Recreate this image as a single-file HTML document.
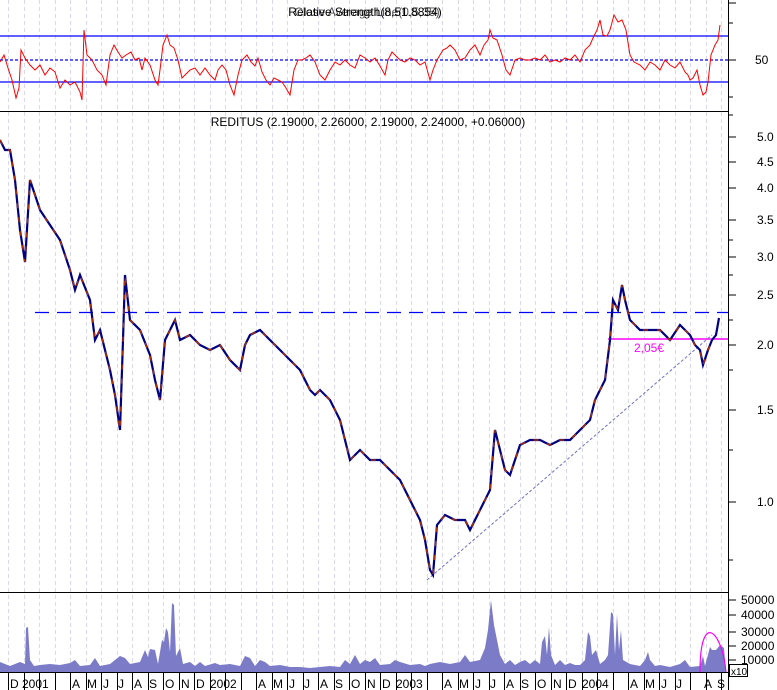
<!DOCTYPE html>
<html><head><meta charset="utf-8"><style>
html,body{margin:0;padding:0;background:#fff;}
svg{display:block;font-family:"Liberation Sans",sans-serif;}
</style></head><body>
<svg width="777" height="690" viewBox="0 0 777 690" xmlns="http://www.w3.org/2000/svg">
<rect width="777" height="690" fill="#fff"/>
<!-- grid lines -->
<g stroke="#d8d8f0" stroke-width="1" stroke-dasharray="4,3">
<path d="M8.5 0V672M24.5 0V672M39.5 0V672M55.5 0V672M70.5 0V672M86.5 0V672M101.5 0V672M117.5 0V672M132.5 0V672M148.5 0V672M163.5 0V672M179.5 0V672M194.5 0V672M210.5 0V672M225.5 0V672M241.5 0V672M256.5 0V672M272.5 0V672M287.5 0V672M303.5 0V672M318.5 0V672M334.5 0V672M349.5 0V672M365.5 0V672M380.5 0V672M396.5 0V672M411.5 0V672M427.5 0V672M442.5 0V672M458.5 0V672M473.5 0V672M489.5 0V672M504.5 0V672M520.5 0V672M535.5 0V672M551.5 0V672M566.5 0V672M582.5 0V672M597.5 0V672M613.5 0V672M628.5 0V672M644.5 0V672M659.5 0V672M675.5 0V672M690.5 0V672M706.5 0V672M721.5 0V672"/>
</g>
<!-- panel borders -->
<g stroke="#000" stroke-width="1">
<path d="M0 111.5H728M0 592.5H728M728.5 0V690M0 672.5H728"/>
</g>
<!-- RSI -->
<g stroke="#0000ff" stroke-width="1.2">
<path d="M0 36H728M0 82H728"/>
<path d="M0 60H728" stroke-dasharray="3,2"/>
</g>
<polyline fill="none" stroke="#ff0000" stroke-width="1" points="0,62 4,55 8,68 12,80 16,98 19,88 21,50 25,58 30,65 35,70 40,65 45,75 50,68 55,72 60,88 65,80 70,85 75,82 80,92 82,100 84,30 87,55 92,60 97,70 102,75 106,85 110,55 114,45 118,52 122,58 126,55 131,52 135,60 139,58 142,70 145,58 150,65 155,80 158,85 160,70 163,45 167,35 170,45 174,48 178,60 182,78 185,75 190,70 195,68 200,75 205,68 210,75 215,80 218,70 222,65 226,70 230,85 234,95 238,75 242,60 247,55 251,62 255,66 258,58 262,72 266,80 270,85 274,78 278,80 282,82 286,88 290,95 294,70 298,60 302,60 306,58 310,55 315,62 320,75 325,80 330,70 335,62 340,65 345,60 350,65 355,68 360,55 365,58 370,62 375,58 380,66 385,75 388,60 392,52 395,55 400,60 405,62 410,58 415,60 420,65 425,62 430,80 433,70 437,60 440,55 443,50 447,48 450,45 455,50 460,60 465,58 470,50 475,45 480,55 484,45 488,40 490,30 493,38 497,40 502,55 506,70 510,75 515,60 520,58 525,60 530,60 535,58 540,60 545,55 550,62 555,60 560,62 565,58 570,60 575,55 580,62 585,50 590,45 593,38 597,30 600,20 603,35 607,36 610,30 614,15 618,22 622,20 626,30 630,55 634,62 640,65 645,70 650,62 655,65 660,70 665,60 670,65 675,68 680,62 685,72 688,75 690,80 693,78 697,70 700,85 703,95 706,92 708,82 711,55 715,45 718,40 720,25"/>
<text x="365" y="16" font-size="12" text-anchor="middle" fill="#000">Relative Strength(8,51.8854)</text>
<text x="367" y="16" font-size="12" text-anchor="middle" fill="#000" opacity="0.7">Close Average Line(0,5,35)</text>
<text x="755" y="64" font-size="12" fill="#000">50</text>
<!-- Main -->
<text x="368" y="126" font-size="12" text-anchor="middle" fill="#000">REDITUS (2.19000, 2.26000, 2.19000, 2.24000, +0.06000)</text>
<path d="M35 312.5H728" stroke="#0000ff" stroke-width="1.2" stroke-dasharray="14,8"/>
<path d="M608 339H728" stroke="#ff00ff" stroke-width="1.5"/>
<text x="634" y="352" font-size="12" fill="#ff00ff">2,05€</text>
<path d="M427 580L712 335" stroke="#7070c8" stroke-width="1" stroke-dasharray="3,2"/>
<polyline fill="none" stroke="#000080" stroke-width="2.2" points="0,140 5,150 10,150 15,180 20,230 25,262 30,180 40,210 50,225 60,240 70,270 75,290 80,275 90,300 95,340 100,330 110,370 115,395 120,430 123,340 125,275 130,320 140,330 150,355 155,380 160,400 165,340 170,330 175,320 180,340 190,335 200,345 210,350 220,345 230,360 240,370 245,345 250,335 260,330 270,340 280,350 290,360 300,370 310,390 315,395 320,390 330,400 340,420 345,440 350,460 360,450 370,460 380,460 390,470 400,480 410,500 420,520 425,540 430,570 433,575 437,525 445,515 455,520 465,520 470,530 480,510 490,490 495,430 500,450 505,470 510,475 515,460 520,445 530,440 540,440 550,445 560,440 570,440 580,430 590,420 595,400 600,390 605,380 610,340 613,300 618,310 622,285 625,300 630,320 640,330 650,330 660,330 670,340 680,325 690,335 695,345 700,350 703,365 708,350 712,340 716,335 719,318"/>
<polyline fill="none" stroke="#a03010" stroke-width="1.5" stroke-dasharray="5,9" points="0,140 5,150 10,150 15,180 20,230 25,262 30,180 40,210 50,225 60,240 70,270 75,290 80,275 90,300 95,340 100,330 110,370 115,395 120,430 123,340 125,275 130,320 140,330 150,355 155,380 160,400 165,340 170,330 175,320 180,340 190,335 200,345 210,350 220,345 230,360 240,370 245,345 250,335 260,330 270,340 280,350 290,360 300,370 310,390 315,395 320,390 330,400 340,420 345,440 350,460 360,450 370,460 380,460 390,470 400,480 410,500 420,520 425,540 430,570 433,575 437,525 445,515 455,520 465,520 470,530 480,510 490,490 495,430 500,450 505,470 510,475 515,460 520,445 530,440 540,440 550,445 560,440 570,440 580,430 590,420 595,400 600,390 605,380 610,340 613,300 618,310 622,285 625,300 630,320 640,330 650,330 660,330 670,340 680,325 690,335 695,345 700,350 703,365 708,350 712,340"/>
<g font-size="12" fill="#000">
<text x="757" y="141">5.0</text><text x="757" y="166">4.5</text><text x="757" y="192">4.0</text>
<text x="757" y="224">3.5</text><text x="757" y="261">3.0</text><text x="757" y="299">2.5</text>
<text x="757" y="349">2.0</text><text x="757" y="414">1.5</text><text x="757" y="506">1.0</text>
</g>
<g stroke="#000" stroke-width="1">
<path d="M728 3H736M728 23H733M728 60H736M728 97H733M728 115H733M728 137H736M728 162H736M728 188H736M728 220H736M728 257H736M728 295H736M728 345H736M728 410H736M728 502H736M728 240H733M728 275H733M728 320H733M728 370H733M728 450H733M728 560H733M728 600H736M728 615H736M728 632H736M728 646H736M728 660H736"/>
</g>
<!-- Volume -->
<polygon fill="#7b7bc8" points="0,672 0,662 5,664 10,666 15,664 20,662 25,664 26,628 28,627 30,660 34,666 40,665 50,664 60,665 70,663 75,660 80,666 90,665 95,658 100,666 110,664 115,660 120,656 125,658 130,664 140,662 145,650 148,657 150,649 155,650 158,664 162,640 164,642 166,628 168,632 170,652 172,603 174,605 176,656 180,648 183,664 190,662 195,666 200,662 205,666 215,663 220,665 230,664 240,666 245,656 250,658 255,666 260,660 265,662 270,666 280,665 290,667 300,667 310,668 320,667 330,666 340,667 345,660 350,664 355,655 360,664 365,660 370,662 375,658 380,665 390,664 395,660 400,662 410,665 420,664 425,666 430,664 440,662 450,664 460,662 465,655 470,662 480,660 485,648 488,630 491,600 494,625 497,640 500,655 505,664 510,660 515,665 520,662 525,660 530,664 535,660 540,664 542,642 545,636 547,655 549,627 551,655 555,665 560,660 565,665 570,663 575,665 580,665 585,660 588,632 590,636 592,655 596,650 600,664 605,660 608,655 611,612 613,614 615,655 617,614 619,650 621,630 623,660 630,664 640,666 645,660 648,652 650,660 655,666 660,665 670,667 680,664 685,660 690,667 700,666 703,656 705,666 710,647 712,650 716,650 720,645 724,648 726,672"/>
<path d="M700 672C700 610 722 630 726 672" fill="none" stroke="#ff00ff" stroke-width="1.2"/>
<g font-size="12" fill="#000">
<text x="741" y="604">50000</text><text x="741" y="619">40000</text><text x="741" y="636">30000</text>
<text x="741" y="650">20000</text><text x="741" y="664">10000</text>
</g>
<rect x="729.5" y="664.5" width="18" height="12" fill="#fff" stroke="#000"/>
<text x="731" y="675" font-size="10" fill="#000">x10</text>
<!-- bottom axis -->
<g stroke="#000" stroke-width="1">
<path d="M8.5 672V690M24.5 672V690M39.5 672V690M55.5 672V690M70.5 672V690M86.5 672V690M101.5 672V690M117.5 672V690M132.5 672V690M148.5 672V690M163.5 672V690M179.5 672V690M194.5 672V690M210.5 672V690M225.5 672V690M241.5 672V690M256.5 672V690M272.5 672V690M287.5 672V690M303.5 672V690M318.5 672V690M334.5 672V690M349.5 672V690M365.5 672V690M380.5 672V690M396.5 672V690M411.5 672V690M427.5 672V690M442.5 672V690M458.5 672V690M473.5 672V690M489.5 672V690M504.5 672V690M520.5 672V690M535.5 672V690M551.5 672V690M566.5 672V690M582.5 672V690M597.5 672V690M613.5 672V690M628.5 672V690M644.5 672V690M659.5 672V690M675.5 672V690M690.5 672V690M706.5 672V690M721.5 672V690"/>
</g>
<g font-size="12" fill="#000">
<text x="10" y="688">D</text><text x="22" y="688">2001</text>
<text x="72" y="688">A</text><text x="87" y="688">M</text><text x="103" y="688">J</text><text x="118" y="688">J</text>
<text x="134" y="688">A</text><text x="149" y="688">S</text><text x="165" y="688">O</text><text x="181" y="688">N</text>
<text x="196" y="688">D</text><text x="210" y="688">2002</text>
<text x="258" y="688">A</text><text x="273" y="688">M</text><text x="289" y="688">J</text><text x="304" y="688">J</text>
<text x="320" y="688">A</text><text x="335" y="688">S</text><text x="351" y="688">O</text><text x="367" y="688">N</text>
<text x="382" y="688">D</text><text x="396" y="688">2003</text>
<text x="444" y="688">A</text><text x="459" y="688">M</text><text x="475" y="688">J</text><text x="490" y="688">J</text>
<text x="506" y="688">A</text><text x="521" y="688">S</text><text x="537" y="688">O</text><text x="553" y="688">N</text>
<text x="568" y="688">D</text><text x="582" y="688">2004</text>
<text x="630" y="688">A</text><text x="645" y="688">M</text><text x="661" y="688">J</text><text x="676" y="688">J</text>
<text x="704" y="688">A</text><text x="717" y="688">S</text>
</g>
</svg>
</body></html>
